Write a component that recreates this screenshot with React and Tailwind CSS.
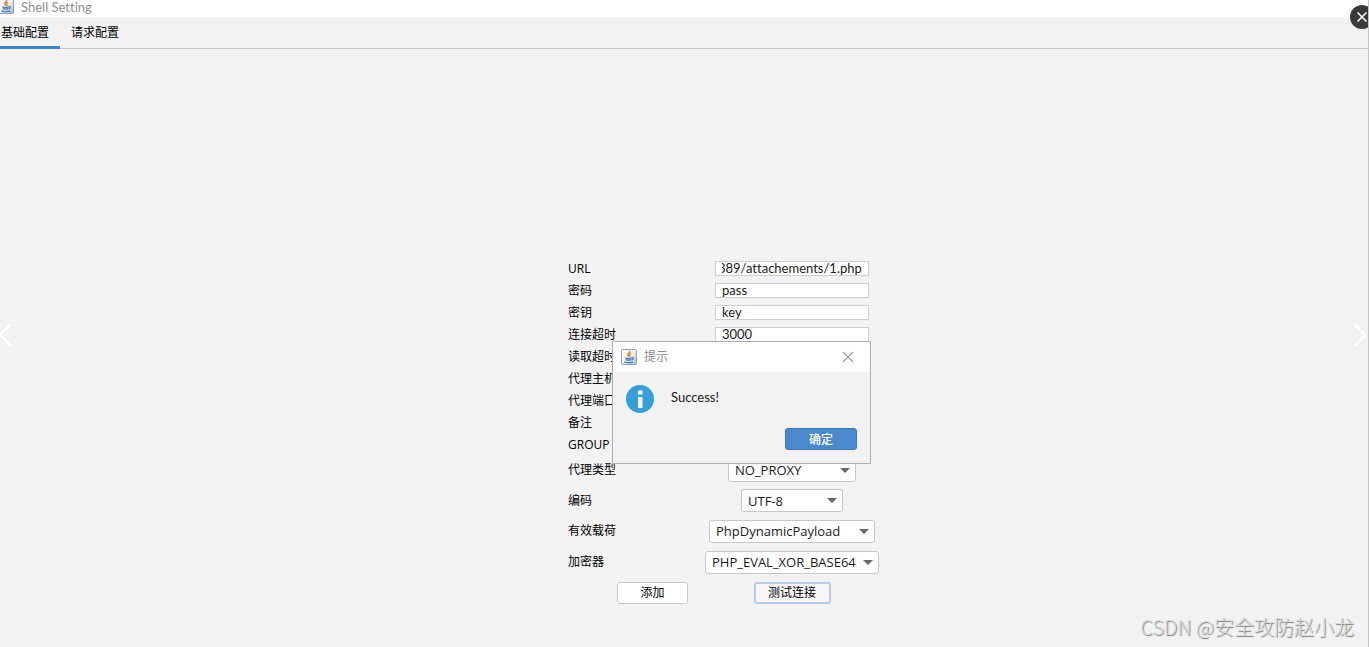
import React, { useEffect, useRef } from "react";

const fields = [
  { id: "url", label: "URL", value: "389/attachements/1.php" },
  { id: "password", label: "密码", value: "pass" },
  { id: "key", label: "密钥", value: "key" },
  { id: "connect-timeout", label: "连接超时", value: "3000" },
  { id: "read-timeout", label: "读取超时", value: "" },
  { id: "proxy-host", label: "代理主机", value: "" },
  { id: "proxy-port", label: "代理端口", value: "" },
  { id: "remark", label: "备注", value: "" },
  { id: "group", label: "GROUP", value: "" },
];

const choices = [
  { id: "proxy-type", label: "代理类型", value: "NO_PROXY", width: "w-32" },
  { id: "encoding", label: "编码", value: "UTF-8", width: "w-[102px]" },
  { id: "payload", label: "有效载荷", value: "PhpDynamicPayload", width: "w-[166px]" },
  { id: "cryption", label: "加密器", value: "PHP_EVAL_XOR_BASE64", width: "w-[174px]" },
];

function JavaIcon({ className }) {
  return (
    <svg viewBox="0 0 16 16" className={className} aria-hidden="true">
      <defs>
        <linearGradient id="tile" x1="0" y1="0" x2="1" y2="1">
          <stop offset="0" stopColor="#ffffff" />
          <stop offset="0.5" stopColor="#eef1f4" />
          <stop offset="1" stopColor="#a3b8ca" />
        </linearGradient>
      </defs>
      <rect x="0.5" y="0.5" width="15" height="15" rx="1" fill="url(#tile)" stroke="#8ba1b5" />
      <path d="M8.600 2c.8 1.600-2.400 2.300-1.800 3.900.2.700.9 1.100 1 1.900M9.900 4.300c-1.300.6-2 1.200-1.300 2.200.4.600.2 1.100-.4 1.500" fill="none" stroke="#ea8a3a" strokeWidth="1.500" />
      <path d="M4.300 8.900c1.600.6 4.700.6 6.300 0M4.800 10.600c1.500.5 4.100.5 5.400 0M10.800 8.800c2-.5 2 1.400-.2 2M3.200 12.800c1.700 1.100 7.200 1 9 0" fill="none" stroke="#4b7fae" strokeWidth="1.200" />
    </svg>
  );
}

function Field({ id, label, value }) {
  const input = useRef(null);

  // Long values show their end, where the caret was left.
  useEffect(() => {
    input.current.scrollLeft = input.current.scrollWidth;
  }, []);

  return (
    <div className="flex h-[22px] items-center justify-between">
      <label htmlFor={id} className="pt-px">{label}</label>
      <input
        ref={input}
        id={id}
        type="text"
        defaultValue={value}
        className="mr-2.5 h-[15px] w-[154px] border border-[#cfcfcf] bg-white px-1.5 py-0.5 font-['Lato','Noto_Sans_CJK_SC',sans-serif] text-[13px] leading-4 text-[#1a1a1a] outline-none [font-variant-ligatures:none]"
      />
    </div>
  );
}

function Combo({ id, value, width }) {
  return (
    <div className={"relative h-[23px] " + width}>
      <select
        id={id}
        defaultValue={value}
        className="block h-full w-full appearance-none rounded-[3px] border border-[#c8c8c8] bg-white pl-1.5 text-[13px] leading-5 text-[#1a1a1a] outline-none"
      >
        <option>{value}</option>
      </select>
      <svg viewBox="0 0 10 5" className="pointer-events-none absolute right-1.5 top-[9px] h-[5px] w-2.5" aria-hidden="true">
        <path d="M0 0h10L5 5z" fill="#666" />
      </svg>
    </div>
  );
}

function Dialog() {
  return (
    <div role="dialog" aria-labelledby="dialog-title" className="absolute left-11 top-[84px] w-[259px] border border-[#adadad] bg-[#f2f2f2]">
      <div className="flex h-[30px] items-center bg-white pl-2 pr-4">
        <JavaIcon className="size-4" />
        <h2 id="dialog-title" className="ml-[7px] flex-1 text-xs text-[#8f8f8f]">提示</h2>
        <button type="button" aria-label="Close" className="text-[#999]">
          <svg viewBox="0 0 12 12" className="size-3" aria-hidden="true">
            <path d="M1 1l10 10M11 1L1 11" stroke="currentColor" strokeWidth="1.100" />
          </svg>
        </button>
      </div>
      <div className="flex gap-[17px] pl-[13px] pt-[13px]">
        <svg viewBox="0 0 28 28" className="size-7" aria-hidden="true">
          <circle cx="14" cy="14" r="14" fill="#389fd6" />
          <path d="M12 5.500h4.500v4H12zM12 12h4.500v11H12z" fill="#f2f2f2" />
        </svg>
        <p className="pt-0.5 font-['Lato','Noto_Sans_CJK_SC',sans-serif] text-[13px] leading-5 text-[#1a1a1a]">Success!</p>
      </div>
      <div className="flex justify-end pb-[13px] pr-[13px] pt-[15px]">
        <button type="button" className="h-[22px] w-[72px] rounded-[3px] border border-[#3f78b8] bg-[#4c89ca] pt-px text-xs font-medium leading-5 text-white">
          确定
        </button>
      </div>
    </div>
  );
}

export default function App() {
  return (
    <div className="relative flex min-h-screen flex-col overflow-hidden border-r border-[#c4c4c4] bg-[#f2f2f2] font-['Open_Sans','Noto_Sans_CJK_SC',sans-serif] text-xs text-black">
      <header className="flex h-[17px] items-start bg-white">
        <JavaIcon className="-ml-0.5 -mt-0.5 size-4" />
        <h1 className="ml-[7px] font-['Lato','Noto_Sans_CJK_SC',sans-serif] text-[13px] leading-[14px] text-[#8f8f8f] [font-variant-ligatures:none]">Shell Setting</h1>
      </header>
      <nav className="flex h-8 border-b border-[#c4c4c4]">
        <button type="button" className="-mb-px w-[60px] border-b-[3px] border-[#4083c9] pl-px pt-0.5 text-left">基础配置</button>
        <button type="button" className="-mb-px w-[70px] border-b-[3px] border-transparent pl-[11px] pt-0.5 text-left">请求配置</button>
      </nav>

      <main className="flex flex-1 justify-center pl-[79px] pt-[208px]">
        <form className="relative w-[311px]" onSubmit={(e) => e.preventDefault()}>
          {fields.map((f) => (
            <Field key={f.id} id={f.id} label={f.label} value={f.value} />
          ))}
          <div className="grid h-[153px] grid-rows-5">
            {choices.map((c) => (
              <div key={c.id} className="flex items-center justify-between">
                <label htmlFor={c.id}>{c.label}</label>
                <div className="flex w-[174px] justify-center">
                  <Combo id={c.id} value={c.value} width={c.width} />
                </div>
              </div>
            ))}
            <div className="flex items-center justify-between pl-[49px]">
              <button type="button" className="h-[22px] w-[71px] rounded-[3px] border border-[#c8c8c8] bg-white">添加</button>
              <div className="flex w-[174px] justify-center">
                <button type="button" className="h-[22px] w-[77px] rounded-[3px] border-2 border-[#b3cdea] bg-[#f7f7f7]">测试连接</button>
              </div>
            </div>
          </div>
          <Dialog />
        </form>
      </main>

      <button type="button" aria-label="Close viewer" className="absolute -right-1.5 top-[5px] flex size-6 items-center rounded-full bg-[#3a3a3a] pl-[7px] text-white">
        <svg viewBox="0 0 10 10" className="size-2.5" aria-hidden="true">
          <path d="M0.500 0.500l9 9M9.500 0.500l-9 9" stroke="currentColor" strokeWidth="1.500" />
        </svg>
      </button>
      <button type="button" aria-label="Previous" className="absolute left-0 top-[323px] text-white">
        <svg viewBox="0 0 12 24" className="h-6 w-3" aria-hidden="true">
          <path d="M10.500 1.500L0 12l10.500 10.500" fill="none" stroke="currentColor" strokeWidth="2" />
        </svg>
      </button>
      <button type="button" aria-label="Next" className="absolute right-0.5 top-[323px] text-white">
        <svg viewBox="0 0 12 24" className="h-6 w-3" aria-hidden="true">
          <path d="M1 1.500L11 12 1 22.500" fill="none" stroke="currentColor" strokeWidth="2" />
        </svg>
      </button>
      <p className="absolute bottom-1.5 right-3.5 font-['Noto_Sans_CJK_SC',sans-serif] text-xl font-light leading-7 text-[#dadada] [text-shadow:1px_1px_1px_#777]">
        CSDN @安全攻防赵小龙
      </p>
    </div>
  );
}
